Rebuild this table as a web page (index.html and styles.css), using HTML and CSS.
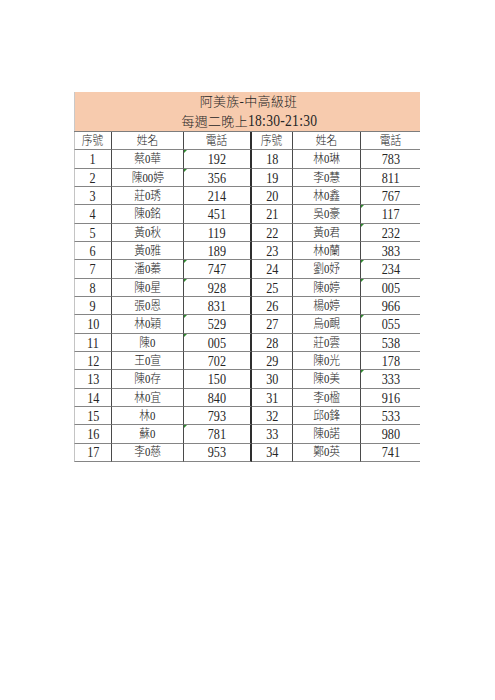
FILE: index.html
```html
<!DOCTYPE html>
<html lang="zh-Hant">
<head>
<meta charset="utf-8">
<title>阿美族-中高級班</title>
<link rel="stylesheet" href="styles.css">
</head>
<body>
<div class="page">
  <div class="sheet">
    <div class="title">
      <div class="t-line">阿美族-中高級班</div>
      <div class="t-line">每週二晚上<span class="t-num">18:30-21:30</span></div>
    </div>
    <div class="grid" id="grid">
      <div class="c c1 hd"><span>序號</span></div>
      <div class="c c2 hd"><span>姓名</span></div>
      <div class="c c3 hd"><span>電話</span></div>
      <div class="c c4 hd"><span>序號</span></div>
      <div class="c c5 hd"><span>姓名</span></div>
      <div class="c c6 hd"><span>電話</span></div>

      <div class="c c1"><span>1</span></div><div class="c c2"><span>蔡0華</span></div><div class="c c3 mark"><span>192</span></div>
      <div class="c c4"><span>18</span></div><div class="c c5"><span>林0琳</span></div><div class="c c6"><span>783</span></div>

      <div class="c c1"><span>2</span></div><div class="c c2"><span>陳00婷</span></div><div class="c c3 mark"><span>356</span></div>
      <div class="c c4"><span>19</span></div><div class="c c5"><span>李0慧</span></div><div class="c c6"><span>811</span></div>

      <div class="c c1"><span>3</span></div><div class="c c2"><span>莊0琇</span></div><div class="c c3"><span>214</span></div>
      <div class="c c4"><span>20</span></div><div class="c c5"><span>林0鑫</span></div><div class="c c6"><span>767</span></div>

      <div class="c c1"><span>4</span></div><div class="c c2"><span>陳0銘</span></div><div class="c c3"><span>451</span></div>
      <div class="c c4"><span>21</span></div><div class="c c5"><span>吳0豪</span></div><div class="c c6 mark"><span>117</span></div>

      <div class="c c1"><span>5</span></div><div class="c c2"><span>黃0秋</span></div><div class="c c3"><span>119</span></div>
      <div class="c c4"><span>22</span></div><div class="c c5"><span>黃0君</span></div><div class="c c6 mark"><span>232</span></div>

      <div class="c c1"><span>6</span></div><div class="c c2"><span>黃0雅</span></div><div class="c c3"><span>189</span></div>
      <div class="c c4"><span>23</span></div><div class="c c5"><span>林0蘭</span></div><div class="c c6"><span>383</span></div>

      <div class="c c1"><span>7</span></div><div class="c c2"><span>潘0蓁</span></div><div class="c c3 mark"><span>747</span></div>
      <div class="c c4"><span>24</span></div><div class="c c5"><span>劉0妤</span></div><div class="c c6 mark"><span>234</span></div>

      <div class="c c1"><span>8</span></div><div class="c c2"><span>陳0星</span></div><div class="c c3 mark"><span>928</span></div>
      <div class="c c4"><span>25</span></div><div class="c c5"><span>陳0婷</span></div><div class="c c6 mark"><span>005</span></div>

      <div class="c c1"><span>9</span></div><div class="c c2"><span>張0恩</span></div><div class="c c3"><span>831</span></div>
      <div class="c c4"><span>26</span></div><div class="c c5"><span>楊0婷</span></div><div class="c c6"><span>966</span></div>

      <div class="c c1"><span>10</span></div><div class="c c2"><span>林0穎</span></div><div class="c c3 mark"><span>529</span></div>
      <div class="c c4"><span>27</span></div><div class="c c5"><span>烏0靦</span></div><div class="c c6 mark"><span>055</span></div>

      <div class="c c1"><span>11</span></div><div class="c c2"><span>陳0</span></div><div class="c c3 mark"><span>005</span></div>
      <div class="c c4"><span>28</span></div><div class="c c5"><span>莊0雲</span></div><div class="c c6"><span>538</span></div>

      <div class="c c1"><span>12</span></div><div class="c c2"><span>王0宣</span></div><div class="c c3"><span>702</span></div>
      <div class="c c4"><span>29</span></div><div class="c c5"><span>陳0光</span></div><div class="c c6"><span>178</span></div>

      <div class="c c1"><span>13</span></div><div class="c c2"><span>陳0存</span></div><div class="c c3"><span>150</span></div>
      <div class="c c4"><span>30</span></div><div class="c c5"><span>陳0美</span></div><div class="c c6 mark"><span>333</span></div>

      <div class="c c1"><span>14</span></div><div class="c c2"><span>林0宜</span></div><div class="c c3"><span>840</span></div>
      <div class="c c4"><span>31</span></div><div class="c c5"><span>李0楹</span></div><div class="c c6"><span>916</span></div>

      <div class="c c1"><span>15</span></div><div class="c c2"><span>林0</span></div><div class="c c3"><span>793</span></div>
      <div class="c c4"><span>32</span></div><div class="c c5"><span>邱0鋒</span></div><div class="c c6"><span>533</span></div>

      <div class="c c1"><span>16</span></div><div class="c c2"><span>蘇0</span></div><div class="c c3 mark"><span>781</span></div>
      <div class="c c4"><span>33</span></div><div class="c c5"><span>陳0諾</span></div><div class="c c6"><span>980</span></div>

      <div class="c c1"><span>17</span></div><div class="c c2"><span>李0慈</span></div><div class="c c3"><span>953</span></div>
      <div class="c c4"><span>34</span></div><div class="c c5"><span>鄭0英</span></div><div class="c c6"><span>741</span></div>
    </div>
  </div>
</div>
</body>
</html>
```
FILE: styles.css
```css
html, body {
  margin: 0;
  padding: 0;
  background: #ffffff;
}

.page {
  width: 495px;
  height: 700px;
  padding-top: 92px;
  padding-left: 74px;
  box-sizing: border-box;
}

.sheet {
  width: 346px;
  font-family: "Liberation Serif", "Noto Sans CJK TC", serif;
  font-weight: 300;
  color: #262626;
}

.title {
  background: #f7cbae;
  height: 39px;
  display: flex;
  flex-direction: column;
  align-items: center;
  justify-content: center;
  border-left: 1px solid #c9c9c9;
  box-sizing: border-box;
  padding-left: 2px;
}

.t-line {
  font-size: 13px;
  line-height: 19px;
  letter-spacing: 0.3px;
}

.t-num {
  display: inline-block;
  font-size: 16px;
  transform: scaleX(0.85);
  transform-origin: left center;
  margin-right: -14px;
}

.grid {
  display: grid;
  grid-template-columns: 38px 72px 68px 41px 68px 59px;
  grid-auto-rows: 18.33px;
  border-top: 1px solid #7d7d7d;
}

.c {
  position: relative;
  display: flex;
  align-items: center;
  justify-content: center;
  border-bottom: 1px solid #858585;
  box-sizing: border-box;
  overflow: visible;
}

.c span {
  display: inline-block;
  font-size: 14.5px;
  line-height: 1;
  transform: scaleX(0.84);
  white-space: nowrap;
  position: relative;
  top: 0.5px;
}

.c2 span, .c5 span, .hd span {
  font-size: 12.5px;
  transform: scaleX(0.86);
}

.c1 {
  border-left: 1px solid #c4c4c4;
  border-right: 1px solid #4a4a4a;
}

.c2 {
  border-right: 1px solid #4a4a4a;
}

.c3 {
  border-right: 2px solid #2e2e2e;
}

.c4 {
  border-right: 1px solid #4a4a4a;
}

.c5 {
  border-right: 1px solid #4a4a4a;
}

.mark::before {
  content: "";
  position: absolute;
  left: 0;
  top: 0;
  width: 0;
  height: 0;
  border-top: 3px solid #2f8a2f;
  border-right: 3px solid transparent;
}
```
